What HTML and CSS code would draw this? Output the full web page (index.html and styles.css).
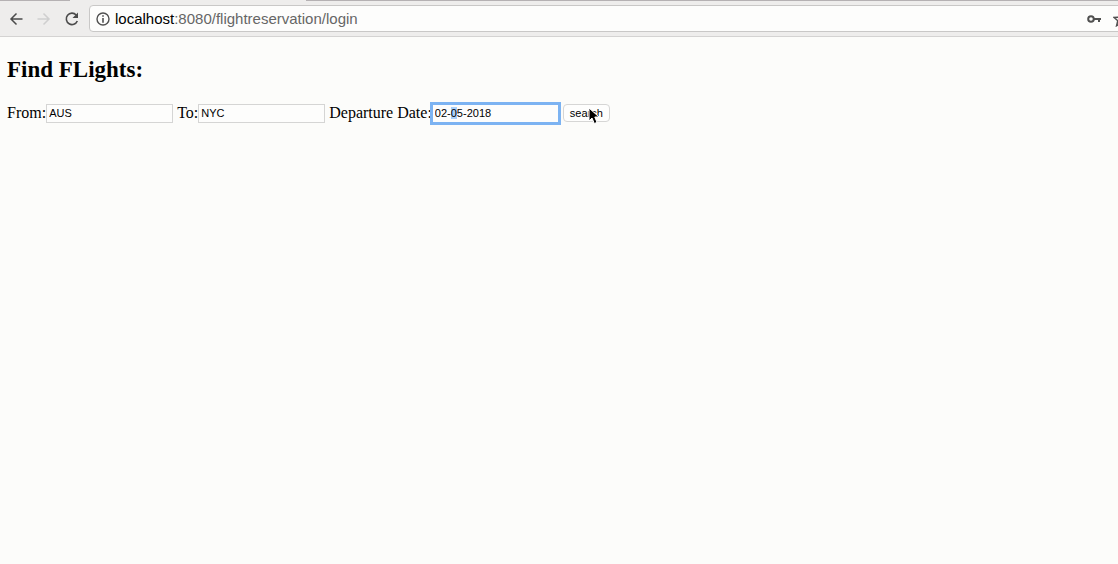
FILE: index.html
```html
<!DOCTYPE html>
<html lang="en">
<head>
<meta charset="utf-8">
<title>Find Flights</title>
<link rel="stylesheet" href="styles.css">
</head>
<body>
<header class="browser">
  <div class="tabs"><span class="tab-strip tab-strip-start"></span><span class="tab-strip tab-strip-end"></span></div>
  <div class="toolbar">
    <nav class="nav">
      <button class="nav-button" type="button" aria-label="Back">
        <svg width="16" height="16" viewBox="0 0 16 16" fill="none" stroke="#4b4b4b" stroke-width="1.5"><path d="M14.5 8H3M8.500 2.500 3 8l5.500 5.500"/></svg>
      </button>
      <button class="nav-button" type="button" aria-label="Forward" disabled>
        <svg width="16" height="16" viewBox="0 0 16 16" fill="none" stroke="#cfcfcf" stroke-width="1.5"><path d="M1.500 8H13M7.500 2.500 13 8l-5.500 5.500"/></svg>
      </button>
      <button class="nav-button" type="button" aria-label="Reload">
        <svg width="16" height="16" viewBox="0 0 16 16"><path d="M13.3 10A5.7 5.7 0 1 1 12.2 4" fill="none" stroke="#4b4b4b" stroke-width="1.6"/><path d="M14 1.500v5.500H8.500z" fill="#4b4b4b"/></svg>
      </button>
    </nav>
    <div class="address">
      <svg width="14" height="14" viewBox="0 0 14 14"><circle cx="7" cy="7" r="6" fill="none" stroke="#505050" stroke-width="1.4"/><path d="M6.2 3.3h1.6v1.5H6.2zM6.2 6h1.6v4.8H6.2z" fill="#505050"/></svg>
      <div class="url" role="textbox" aria-label="Address"><span class="host">localhost</span>:8080/flightreservation/login</div>
      <svg class="key" width="14" height="10" viewBox="0 0 14 10"><circle cx="4" cy="5" r="2.8" fill="none" stroke="#505050" stroke-width="2"/><path d="M7 4h7v2h-1v2h-2V6H7z" fill="#505050"/></svg>
      <svg class="star" width="16" height="16" viewBox="0 0 16 16"><path d="m8 1.5 2 4.6 5 .4-3.800 3.300 1.200 4.900L8 12.100l-4.400 2.600 1.200-4.900L1 6.500l5-.4z" fill="none" stroke="#505050" stroke-width="1.5"/></svg>
    </div>
  </div>
</header>
<main class="page">
  <h2 class="title">Find FLights:</h2>
  <form class="search-form">
    <div class="field"><label for="from">From:</label><input class="box" id="from" type="text" value="AUS"></div>
    <div class="field"><label for="to">To:</label><input class="box" id="to" type="text" value="NYC"></div>
    <div class="field"><label for="departure">Departure Date:</label><input class="box" id="departure" type="text" value="02-05-2018" autofocus></div>
    <div class="submit">
      <button class="search" type="button">search</button>
      <svg class="pointer" width="12" height="18" viewBox="0 0 12 18"><path d="M1 1v13l3-3 2.300 5.500 2.700-1.100L6.800 10H11z" fill="#000" stroke="#fff" stroke-width="1"/></svg>
    </div>
  </form>
</main>
<script src="script.js"></script>
</body>
</html>
```
FILE: styles.css
```css
* { box-sizing: border-box; }

body {
  margin: 0;
  min-height: 100vh;
  overflow-x: hidden;
  background: #fcfcfa;
  color: #000;
  font-family: "Liberation Serif", "Times New Roman", serif;
  font-size: 16px;
}

.browser {
  overflow: hidden;
  background: #eeedec;
  border-bottom: 1px solid #d4d3d2;
  font-family: "Liberation Sans", Arial, sans-serif;
}

.tabs {
  display: flex;
  justify-content: space-between;
  height: 1px;
}

.tab-strip { background: #b5b1b3; }
.tab-strip-start { width: 70px; }
.tab-strip-end { width: calc(100% - 306px); }

.toolbar {
  display: flex;
  align-items: center;
  padding: 4px 0;
}

.nav {
  display: flex;
  gap: 12px;
  padding: 0 9px 0 8px;
}

.nav-button {
  display: block;
  width: 16px;
  height: 16px;
  padding: 0;
  border: 0;
  background: none;
}

.nav-button svg,
.address svg { display: block; flex: none; }

.address {
  display: flex;
  flex: 1;
  align-items: center;
  height: 27px;
  margin-right: -12px;
  padding-left: 6px;
  border: 1px solid #c9c8c7;
  border-radius: 4px;
  background: #fdfdfc;
}

.url {
  flex: 1;
  padding-left: 5px;
  color: #666;
  font-size: 15px;
  line-height: 20px;
  white-space: nowrap;
}

.host { color: #000; }
.key { margin-right: 12px; }

.page { padding: 19px 7px; }

.title {
  margin: 0 0 19px;
  font-size: 23px;
  line-height: 28px;
}

.search-form {
  display: flex;
  flex-wrap: wrap;
  align-items: center;
  gap: 4px;
}

.field {
  display: flex;
  align-items: center;
  line-height: 20px;
}

.box {
  width: 127px;
  height: 19px;
  padding: 1px 2px;
  border: 1px solid #d5d5d4;
  border-radius: 0;
  background: #fdfdfc;
  color: #000;
  font: 11px "Liberation Sans", Arial, sans-serif;
}

.box:focus {
  border-color: #72a9ec;
  outline: 3px solid #7cb3f2;
  outline-offset: -1px;
}

.box::selection {
  background: #a9d0fa;
  color: #000;
}

.submit { position: relative; }

.search {
  display: block;
  height: 18px;
  padding: 0 6px;
  border: 1px solid #d6d6d5;
  border-radius: 4px;
  background: #fefefd;
  color: #000;
  font: 11px "Liberation Sans", Arial, sans-serif;
}

.pointer {
  position: absolute;
  top: 3px;
  left: 25px;
  pointer-events: none;
}
```
FILE: script.js
```js
const departure = document.getElementById("departure");
departure.focus();
departure.setSelectionRange(3, 4);
```
